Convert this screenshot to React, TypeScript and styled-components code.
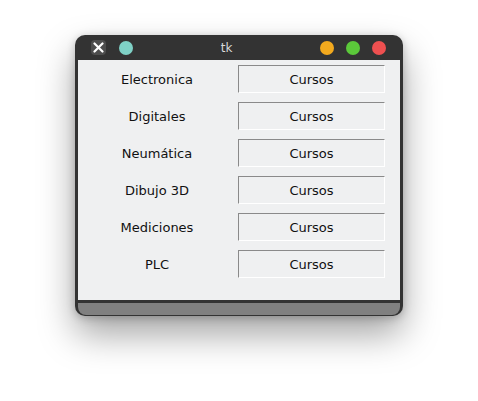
import React from "react";
import styled, { createGlobalStyle } from "styled-components";

const Global = createGlobalStyle`
  html, body { margin: 0; padding: 0; background: #ffffff; }
  body { font-family: "DejaVu Sans", sans-serif; }
`;

const Page = styled.div`
  width: 478px;
  height: 401px;
  padding: 35px 0 0 75px;
  box-sizing: border-box;
`;

const Window = styled.div`
  width: 328px;
  height: 281px;
  box-sizing: border-box;
  background: #333333;
  border-radius: 10px;
  padding: 0 3px 1px 3px;
  display: flex;
  flex-direction: column;
  box-shadow: 0 18px 36px rgba(0, 0, 0, 0.36), 0 2px 8px rgba(0, 0, 0, 0.22);
`;

const TitleBar = styled.div`
  height: 25px;
  display: flex;
  align-items: center;
  padding: 0 14px 0 13px;
  gap: 13px;
`;

const CloseBtn = styled.div`
  width: 15px;
  height: 15px;
  border-radius: 4px;
  background: #4d4d4d;
  display: flex;
  align-items: center;
  justify-content: center;
`;

const Dot = styled.div<{ $c: string }>`
  width: 14px;
  height: 14px;
  border-radius: 50%;
  background: ${(p) => p.$c};
`;

const Title = styled.div`
  flex: 1;
  text-align: center;
  color: #d8d8d8;
  font-size: 12px;
  font-family: "DejaVu Sans", sans-serif;
`;

const Lights = styled.div`
  display: flex;
  gap: 12px;
`;

const Content = styled.div`
  height: 240px;
  background: #eff0f1;
  display: grid;
  grid-template-columns: 160px 147px;
  grid-auto-rows: 28px;
  row-gap: 9px;
  padding-top: 5px;
  box-sizing: border-box;
  align-content: start;
`;

const Label = styled.div`
  display: flex;
  align-items: center;
  justify-content: center;
  font-size: 13px;
  color: #111;
  padding-right: 2px;
`;

const Button = styled.div`
  display: flex;
  align-items: center;
  justify-content: center;
  font-size: 13px;
  color: #111;
  background: #eff0f1;
  border-top: 1px solid #8a8a8a;
  border-left: 1px solid #8a8a8a;
  border-bottom: 1px solid #ffffff;
  border-right: 1px solid #ffffff;
  box-sizing: border-box;
`;

const Separator = styled.div`
  height: 3px;
  background: #333333;
`;

const Footer = styled.div`
  height: 12px;
  background: #808080;
  border-radius: 0 0 8px 8px;
`;

const items = ["Electronica", "Digitales", "Neumática", "Dibujo 3D", "Mediciones", "PLC"];

export default function App() {
  return (
    <Page>
      <Global />
      <Window>
        <TitleBar>
          <CloseBtn>
            <svg width="11" height="11" viewBox="0 0 11 11">
              <path d="M1.5 1.5 L9.5 9.5 M9.5 1.5 L1.5 9.5" stroke="#ffffff" strokeWidth="2.2" strokeLinecap="round" />
            </svg>
          </CloseBtn>
          <Dot $c="#7fd1c6" />
          <Title>tk</Title>
          <Lights>
            <Dot $c="#f2a91e" />
            <Dot $c="#5bc83a" />
            <Dot $c="#ee5050" />
          </Lights>
        </TitleBar>
        <Content>
          {items.map((it) => (
            <React.Fragment key={it}>
              <Label>{it}</Label>
              <Button>Cursos</Button>
            </React.Fragment>
          ))}
        </Content>
        <Separator />
        <Footer />
      </Window>
    </Page>
  );
}
